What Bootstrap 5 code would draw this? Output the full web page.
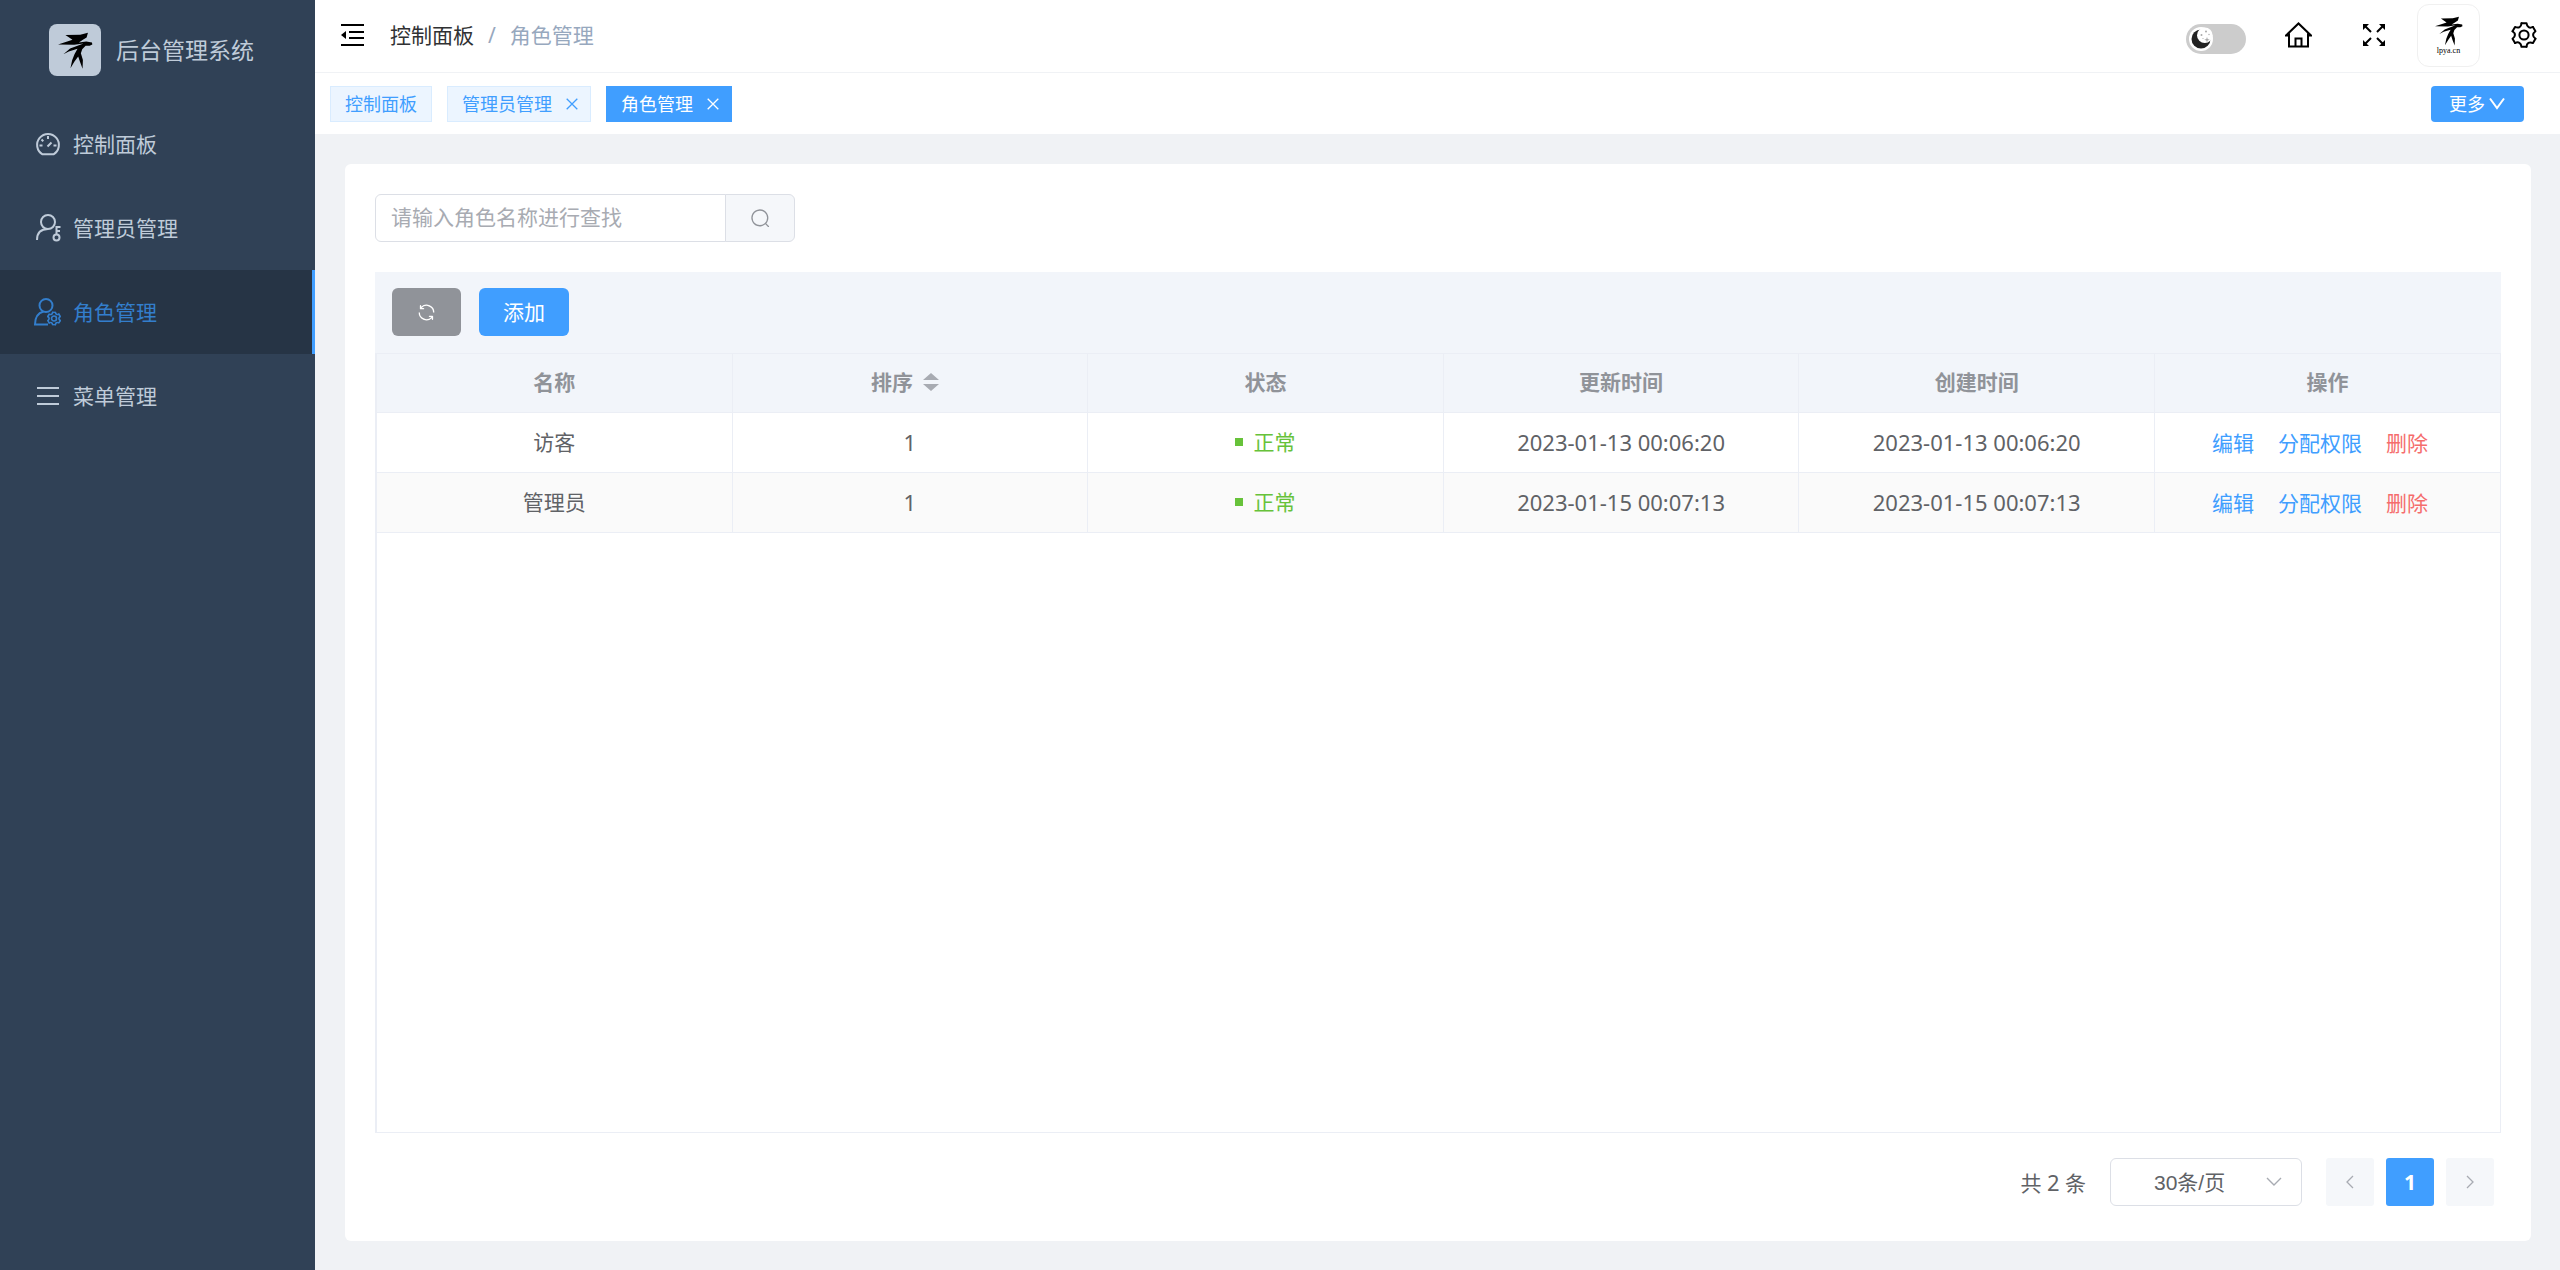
<!DOCTYPE html>
<html lang="zh-CN">
<head>
<meta charset="utf-8">
<meta name="viewport" content="width=device-width, initial-scale=1">
<title>后台管理系统</title>
<link href="https://cdn.jsdelivr.net/npm/bootstrap@5.3.0/dist/css/bootstrap.min.css" rel="stylesheet">
<style>
:root { --brand: #409eff; --line: #ebeef5; --soft: #f2f5fa; --danger: #f56c6c; --ok: #67c23a; }
body { font-family: "Noto Sans", "Noto Sans CJK SC", sans-serif; font-size: 21px; line-height: 30px; color: #606266; background: #f0f2f5; }
a { text-decoration: none; }
svg { display: block; flex: none; }
.fill-icon { fill: currentColor; }
.line-icon { fill: none; stroke: currentColor; stroke-width: 2; }
.thin-icon { fill: none; stroke: currentColor; stroke-width: 1.3; }

.side { width: 315px; background: #304156; color: #bfcbd9; }
.side-brand { height: 100px; margin-bottom: 2px; padding-left: 49px; gap: 15px; font-size: 23px; }
.side-logo { width: 52px; height: 52px; border-radius: 8px; background: #bfcbd9; color: #000; }
.side-item { height: 84px; padding-left: 34px; gap: 11px; color: #bfcbd9; border-right: 3px solid transparent; }
.side-item.active { background: #263445; color: #337ecc; border-right-color: var(--brand); }

.topbar { height: 73px; padding: 0 23px 2px 26px; border-bottom: 1px solid #f0f2f5; color: #000; }
.crumbs { gap: 14px; margin-left: 26px; color: #97a8be; }
.crumbs a { color: #303133; }
.icon-btn { border: 0; padding: 0; background: none; color: #000; }
.screen-btn { margin-left: 51px; }
.theme-switch { width: 60px; height: 30px; margin-right: 39px; margin-top: 7px; }
.theme-switch input { appearance: none; width: 60px; height: 30px; border-radius: 15px; background: #ccc; display: block; margin: 0; }
.theme-switch svg { position: absolute; left: 3px; top: 3px; pointer-events: none; }
.avatar { width: 63px; height: 63px; border: 1px solid #f0f0f0; border-radius: 12px; background: #fff; padding: 0; margin: 0 31px 0 32px; }
.avatar-name { font: 8px/9px "Liberation Serif", serif; color: #000; }

.tagbar { height: 61px; padding: 0 36px 0 15px; gap: 15px; }
.tag { height: 36px; padding: 0 14px; border: 1px solid #d9ecff; background: #ecf5ff; color: var(--brand); font-size: 18px; gap: 14px; }
.tag-closable { padding-right: 12px; }
.tag.active { background: var(--brand); border-color: var(--brand); color: #fff; }
.tag-x { border: 0; background: none; padding: 0; color: inherit; }
.more-btn { height: 36px; padding: 0 18px; font-size: 18px; line-height: 34px; border-radius: 4px; gap: 3px; }
.btn-brand { background: var(--brand); color: #fff; border: 0; }

.stage { padding: 30px 29px 29px 30px; }
.panel { background: #fff; border-radius: 6px; padding: 30px 30px 35px; }
.search { width: 420px; height: 48px; }
.search .form-control { border-color: #dcdfe6; font-size: 21px; padding: 0 15px; color: #606266; border-radius: 6px 0 0 6px; }
.search .form-control::placeholder { color: #a8abb2; }
.search .btn { width: 70px; background: #f5f7fa; border-color: #dcdfe6; color: #909399; border-radius: 0 6px 6px 0; padding: 0; }

.tools { height: 81px; margin-top: 30px; padding: 0 17px 1px; gap: 18px; background: var(--soft); }
.tools .btn { height: 48px; border-radius: 6px; font-size: 21px; padding: 0 24px; line-height: 48px; color: #fff; }
.btn-gray { background: #909399; border: 0; width: 69px; }
.grid-box { border: 1px solid var(--line); border-left-width: 2px; }
.grid-box .table { table-layout: fixed; border-collapse: separate; border-spacing: 0; border-color: var(--line); color: #606266; }
.grid-box .table > :not(caption) > * > * { height: 60px; padding: 0 18px 2px; text-align: center; vertical-align: middle; border-width: 0 1px 1px 0; background: #fff; color: inherit; box-shadow: none; }
.grid-box .table > tbody > tr:nth-child(even) > * { background: #fafafa; }
.grid-box .table > thead > tr > * { background: var(--soft); color: #909399; font-weight: 700; height: 59px; }
.grid-box .table tr > :last-child { border-right-width: 0; }
.grid-box .table > tbody > tr > .act-cell { padding-bottom: 0; }
.col-act { width: 345px; }
.num { font-size: 22px; }
.sorter { width: 36px; }
.state { color: var(--ok); gap: 10px; }
.state i { width: 8px; height: 8px; background: var(--ok); }
.acts { gap: 24px; padding-right: 15px; }
.acts a { color: var(--brand); }
.acts a.del { color: var(--danger); }

.foot { padding: 25px 7px 0 0; }
.page-size { width: 192px; height: 48px; margin: 0 24px; padding: 2px 50px 0 43px; font-family: "Liberation Sans", "Noto Sans CJK SC", sans-serif; font-size: 21px; line-height: 44px; color: #606266; border-color: #dcdfe6; border-radius: 6px;
  background-image: url("data:image/svg+xml,%3Csvg xmlns='http://www.w3.org/2000/svg' viewBox='0 0 16 10'%3E%3Cpath d='M1 1l7 7 7-7' fill='none' stroke='%23a8abb2' stroke-width='1.4'/%3E%3C/svg%3E"); background-size: 16px 10px; background-position: right 19px center; }
.page-list { gap: 12px; }
.page-btn { width: 48px; height: 48px; border: 0; border-radius: 3px; background: #f5f7fa; color: #a8abb2; }
.page-btn.active { background: var(--brand); color: #fff; font-weight: 700; }
</style>
<script src="https://cdn.jsdelivr.net/npm/bootstrap@5.3.0/dist/js/bootstrap.bundle.min.js"></script>
</head>
<body>
<svg class="d-none" aria-hidden="true">
  <symbol id="bird" viewBox="174 92 104 110">
    <path d="M196 101L240 100 263 94 259 108 248 115 236 123 258 120 275 123 276 129 268 133 256 133 246 143 242 155 248 175 247 201 239 180 234 165 223 180 211 200 216 176 223 158 232 142 206 150 190 158 210 141 250 126 222 130 174 129 206 119 217 115z"/>
  </symbol>
  <symbol id="cog" viewBox="0 0 26 26">
    <g stroke-linejoin="round" stroke-linecap="round">
      <path id="cogarc" d="M10.500 1.200H15.500C16 5.200 18.500 6.600 21.950 4.950"/>
      <use href="#cogarc" transform="rotate(60 13 13)"/><use href="#cogarc" transform="rotate(120 13 13)"/><use href="#cogarc" transform="rotate(180 13 13)"/><use href="#cogarc" transform="rotate(240 13 13)"/><use href="#cogarc" transform="rotate(300 13 13)"/>
      <circle cx="13" cy="13" r="4.600"/>
    </g>
  </symbol>
  <symbol id="cross" viewBox="0 0 12 12"><path d="M.7.7l10.600 10.600M11.300.7L.7 11.300"/></symbol>
</svg>

<div class="d-flex min-vh-100">
  <aside class="side flex-shrink-0">
    <div class="side-brand d-flex align-items-center">
      <span class="side-logo d-flex align-items-center justify-content-center"><svg width="35" height="37"><use href="#bird"/></svg></span>
      <span>后台管理系统</span>
    </div>
    <nav class="nav flex-column">
      <a href="#" class="side-item d-flex align-items-center">
        <svg class="line-icon" width="28" height="28" viewBox="-2 -2 28 28"><path d="M6.500 22.300H17.500A10.900 10.900 0 1 0 6.500 22.300z"/><path d="M3.500 13.500h3M17.500 13.500h3M12 4v3M5.500 7.500l1.800 1.800M11.500 14.500l4-4"/></svg>
        <span>控制面板</span></a>
      <a href="#" class="side-item d-flex align-items-center">
        <svg class="line-icon" width="28" height="28" viewBox="-2 0 28 28"><circle cx="12" cy="8" r="7"/><path d="M1 26C1 19 5 15 12 15M20.500 20.500V13H24.500M20.500 17H24"/><circle cx="20.500" cy="23.500" r="3"/></svg>
        <span>管理员管理</span></a>
      <a href="#" class="side-item active d-flex align-items-center" aria-current="page">
        <svg class="line-icon" width="28" height="28" viewBox="0 0 28 28"><circle cx="12" cy="7.500" r="6.500"/><path d="M14 26.500H1C1 19.500 4 15 9.500 13.500"/><g transform="translate(13 13.500) scale(.54)" stroke-width="3"><use href="#cog" width="26" height="26"/></g></svg>
        <span>角色管理</span></a>
      <a href="#" class="side-item d-flex align-items-center">
        <svg class="line-icon" width="28" height="28" viewBox="0 0 28 28"><path d="M3 6h22M3 14h22M3 22h22"/></svg>
        <span>菜单管理</span></a>
    </nav>
  </aside>

  <div class="d-flex flex-column flex-grow-1">
    <header class="bg-white">
      <div class="topbar d-flex align-items-center">
        <button class="icon-btn" type="button" aria-label="折叠菜单"><svg class="line-icon" width="23" height="22" viewBox="0 0 23 22"><path d="M0 1h23M8 8h15M8 14h15M0 21h23"/><path d="M0 11l5-4v8z" fill="#000" stroke="none"/></svg></button>
        <nav class="crumbs d-flex" aria-label="breadcrumb"><a href="#">控制面板</a><span>/</span><span>角色管理</span></nav>
        <label class="theme-switch position-relative ms-auto"><input type="checkbox" role="switch" aria-label="夜间模式">
          <svg width="24" height="24" viewBox="0 0 24 24"><circle cx="12" cy="12" r="12" fill="#fff"/><circle cx="12" cy="12" r="9.500" fill="#222"/><circle cx="15.800" cy="8.200" r="7.800" fill="#fff"/><g fill="#aaa"><circle cx="12.500" cy="8" r="1"/><circle cx="17" cy="4.500" r="1"/><circle cx="20" cy="7.500" r=".7"/><circle cx="14" cy="11.500" r=".6"/><path d="M18 10l.7 2 2 .7-2 .7-.7 2-.7-2-2-.7 2-.7z"/></g></svg></label>
        <button class="icon-btn" type="button" aria-label="首页"><svg class="line-icon" width="27" height="26" viewBox="0 0 27 26"><path d="M4 13.500H1L13.500 1.500 26 13.500H23M4 11.500V24.500H23V11.500M10.500 24V16.500H16.500V24"/></svg></button>
        <button class="icon-btn screen-btn" type="button" aria-label="全屏"><svg class="line-icon" width="22" height="22" viewBox="0 0 22 22"><path d="M2 2l6 6M20 2l-6 6M2 20l6-6M20 20l-6-6"/><path d="M0 0h6L0 6zM22 0h-6l6 6zM0 22h6l-6-6zM22 22h-6l6-6z" fill="#000" stroke="none"/></svg></button>
        <button class="avatar d-flex flex-column align-items-center justify-content-center" type="button"><svg width="28" height="30"><use href="#bird"/></svg><span class="avatar-name">lpya.cn</span></button>
        <button class="icon-btn" type="button" aria-label="设置"><svg class="line-icon" width="26" height="26"><use href="#cog"/></svg></button>
      </div>
      <div class="tagbar d-flex align-items-center">
        <a href="#" class="tag d-flex align-items-center">控制面板</a>
        <span class="tag tag-closable d-flex align-items-center">管理员管理<button class="tag-x" type="button" aria-label="关闭"><svg class="thin-icon" width="12" height="12"><use href="#cross"/></svg></button></span>
        <span class="tag tag-closable active d-flex align-items-center">角色管理<button class="tag-x" type="button" aria-label="关闭"><svg class="thin-icon" width="12" height="12"><use href="#cross"/></svg></button></span>
        <button class="btn btn-brand more-btn ms-auto d-flex align-items-center" type="button">更多<svg class="line-icon" width="18" height="14" viewBox="0 0 18 14"><path d="M2 1.500l7 9.500 7-9.500"/></svg></button>
      </div>
    </header>

    <main class="stage d-flex flex-column flex-grow-1">
      <section class="panel d-flex flex-column flex-grow-1">
        <form class="search input-group">
          <input class="form-control" type="text" placeholder="请输入角色名称进行查找" aria-label="角色名称">
          <button class="btn d-flex align-items-center justify-content-center" type="button" aria-label="搜索"><svg class="fill-icon" width="21" height="21" viewBox="0 0 1024 1024"><path d="m795.904 750.720 124.992 124.928a32 32 0 0 1-45.248 45.248L750.656 795.904a416 416 0 1 1 45.248-45.248zM480 832a352 352 0 1 0 0-704 352 352 0 0 0 0 704z"/></svg></button>
        </form>
        <div class="tools d-flex align-items-center">
          <button class="btn btn-gray d-flex align-items-center justify-content-center" type="button" aria-label="刷新"><svg class="fill-icon" width="21" height="21" viewBox="0 0 1024 1024"><path d="M771.776 794.880A384 384 0 0 1 128 512h64a320 320 0 0 0 555.712 216.448H654.720a32 32 0 1 1 0-64h149.056a32 32 0 0 1 32 32v148.928a32 32 0 1 1-64 0v-50.560zM276.288 295.616h92.992a32 32 0 0 1 0 64H220.160a32 32 0 0 1-32-32V178.560a32 32 0 0 1 64 0v50.560A384 384 0 0 1 896.128 512h-64a320 320 0 0 0-555.776-216.384z"/></svg></button>
          <button class="btn btn-brand" type="button">添加</button>
        </div>
        <div class="grid-box flex-grow-1">
          <table class="table mb-0">
            <colgroup><col><col><col><col><col><col class="col-act"></colgroup>
            <thead><tr>
              <th scope="col">名称</th>
              <th scope="col"><span class="d-flex align-items-center justify-content-center">排序<span class="sorter d-flex justify-content-center"><svg width="16" height="18" viewBox="0 0 16 18" fill="#a8abb2"><path d="M8 0l8 7H0zM8 18l8-7H0z"/></svg></span></span></th>
              <th scope="col">状态</th><th scope="col">更新时间</th><th scope="col">创建时间</th><th scope="col">操作</th>
            </tr></thead>
            <tbody>
              <tr><td>访客</td><td class="num">1</td><td><span class="state d-flex align-items-center justify-content-center"><i></i>正常</span></td><td class="num">2023-01-13 00:06:20</td><td class="num">2023-01-13 00:06:20</td><td class="act-cell"><div class="acts d-flex justify-content-center"><a href="#">编辑</a><a href="#">分配权限</a><a href="#" class="del">删除</a></div></td></tr>
              <tr><td>管理员</td><td class="num">1</td><td><span class="state d-flex align-items-center justify-content-center"><i></i>正常</span></td><td class="num">2023-01-15 00:07:13</td><td class="num">2023-01-15 00:07:13</td><td class="act-cell"><div class="acts d-flex justify-content-center"><a href="#">编辑</a><a href="#">分配权限</a><a href="#" class="del">删除</a></div></td></tr>
            </tbody>
          </table>
        </div>
        <div class="foot d-flex align-items-center justify-content-end">
          <span>共 <span class="num">2</span> 条</span>
          <select class="form-select page-size" aria-label="每页条数"><option>30条/页</option></select>
          <nav class="page-list d-flex" aria-label="分页">
            <button class="page-btn d-flex align-items-center justify-content-center" type="button" disabled aria-label="上一页"><svg class="thin-icon" width="8" height="14" viewBox="0 0 8 14"><path d="M7 1L1 7l6 6"/></svg></button>
            <button class="page-btn active" type="button">1</button>
            <button class="page-btn d-flex align-items-center justify-content-center" type="button" disabled aria-label="下一页"><svg class="thin-icon" width="8" height="14" viewBox="0 0 8 14"><path d="M1 1l6 6-6 6"/></svg></button>
          </nav>
        </div>
      </section>
    </main>
  </div>
</div>
</body>
</html>
